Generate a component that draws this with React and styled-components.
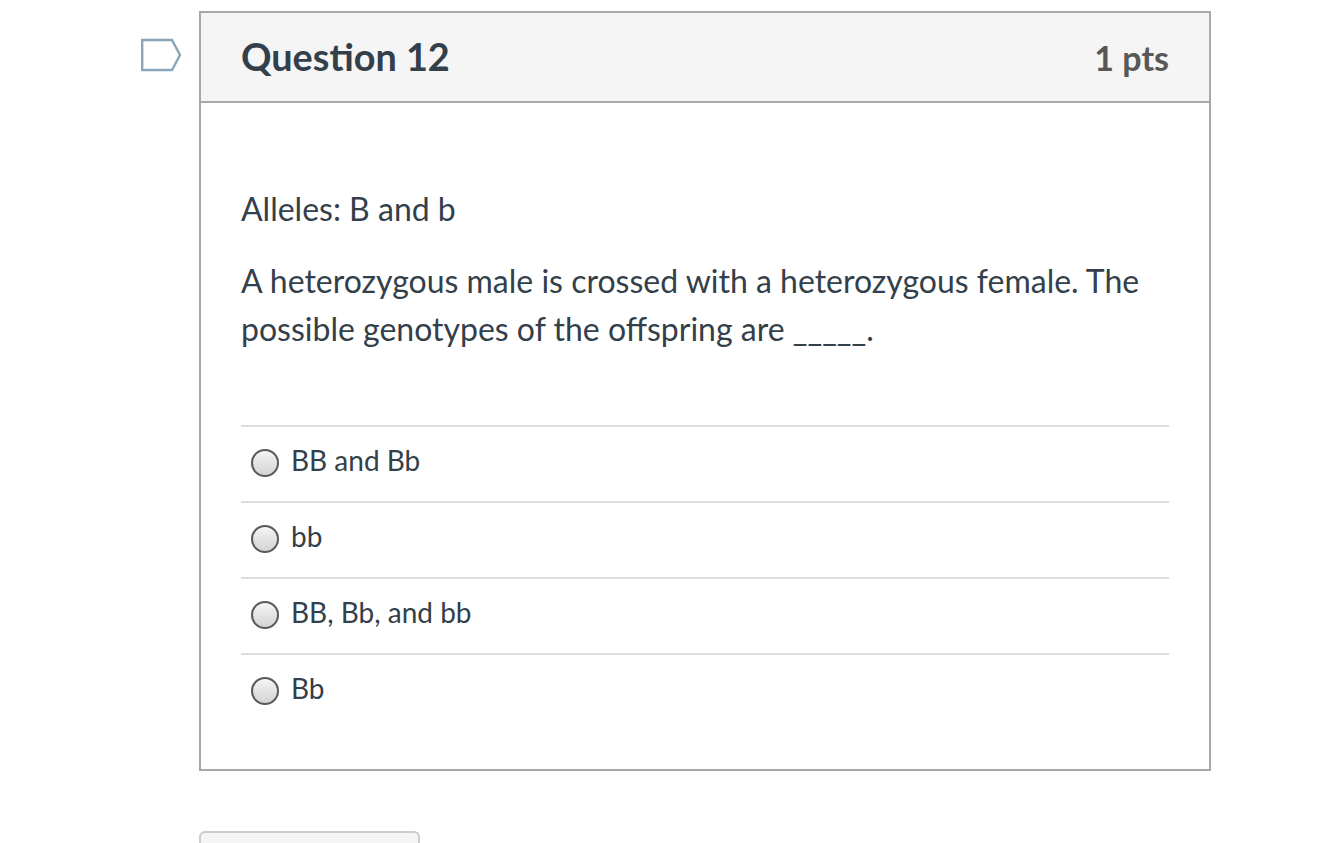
import React from "react";
import styled, { createGlobalStyle } from "styled-components";

const Global = createGlobalStyle`
  html, body { margin: 0; padding: 0; background: #fff; }
  body { font-family: Lato, "Open Sans", sans-serif; color: #2d3b45; height: 843px; overflow: hidden; }
`;
const Page = styled.div`
  display: flex;
  flex-direction: column;
  padding: 11px 0 0 199px;
  width: 1012px;
`;
const Card = styled.section`
  position: relative;
  width: 1012px;
  height: 760px;
  box-sizing: border-box;
  border: 2px solid #a8a8a8;
`;
const Flag = styled.svg`
  position: absolute;
  left: -60px;
  top: 25px;
  width: 42px;
  height: 34px;
`;
const Header = styled.header`
  display: flex;
  justify-content: space-between;
  align-items: center;
  box-sizing: border-box;
  height: 90px;
  padding: 0 40px;
  background: #f5f5f5;
  border-bottom: 2px solid #a8a8a8;
`;
const Title = styled.h2`
  margin: 0 0 2px;
  font-size: 37.8px;
  font-weight: 700;
  color: #333f4a;
`;
const Points = styled.div`
  font-size: 34px;
  font-weight: 700;
  color: #585858;
`;
const Content = styled.div`
  padding: 82px 40px 0;
`;
const Para = styled.p`
  margin: 0 0 24px;
  font-size: 32px;
  line-height: 48px;
  color: #333f4a;
`;
const Answers = styled.div`
  margin-top: 72px;
  display: flex;
  flex-direction: column;
`;
const Answer = styled.label`
  display: flex;
  align-items: center;
  height: 76px;
  box-sizing: border-box;
  border-top: 2px solid #ddd;
  padding-left: 10px;
  font-size: 28px;
  color: #333f4a;
`;
const Radio = styled.span`
  width: 28px;
  height: 28px;
  box-sizing: border-box;
  flex: none;
  border-radius: 50%;
  border: 2px solid #5a5a5a;
  background: linear-gradient(#f4f4f4, #d4d4d4);
  margin: 0 12px 2px 0;
`;
const Label = styled.span`
  margin-bottom: 8px;
`;
const NextButton = styled.div`
  margin-top: 60px;
  width: 221px;
  height: 40px;
  box-sizing: border-box;
  border: 2px solid #c7cdd1;
  border-radius: 6px;
  background: #f5f5f5;
`;

const options = ["BB and Bb", "bb", "BB, Bb, and bb", "Bb"];

export default function App() {
  return (
    <>
      <Global />
      <Page>
        <Card>
          <Flag viewBox="0 0 42 34" fill="none">
            <path d="M1.2 2 H31 L39 17 L31 32 H1.2 Z" stroke="#8aa6bb" strokeWidth="2.4" />
          </Flag>
          <Header>
            <Title>Question 12</Title>
            <Points>1 pts</Points>
          </Header>
          <Content>
            <Para>Alleles: B and b</Para>
            <Para>A heterozygous male is crossed with a heterozygous female. The possible genotypes of the offspring are _____.</Para>
            <Answers>
              {options.map((o) => (
                <Answer key={o}><Radio /><Label>{o}</Label></Answer>
              ))}
            </Answers>
          </Content>
        </Card>
        <NextButton />
      </Page>
    </>
  );
}
